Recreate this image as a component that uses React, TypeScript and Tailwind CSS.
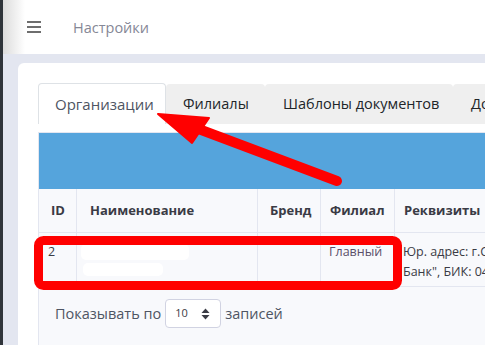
import React from "react";

export default function App() {
  const font = { fontFamily: '"Open Sans", "Noto Sans", sans-serif' };
  return (
    <div className="relative w-[485px] h-[345px] overflow-hidden bg-[#e3e6f0]" style={font}>
      <div className="flex h-full">
        <div className="w-[3px] h-full bg-[#2f343a] shrink-0" />
        <div className="flex-1 flex flex-col min-w-0">
          {/* header */}
          <div className="relative h-[54px] bg-white flex items-center shrink-0">
            <div className="absolute left-0 top-0 h-full w-[22px] bg-gradient-to-r from-[#dcdcdc] to-white" />
            <div className="relative ml-[24px] mb-[1px] flex flex-col gap-[3px] w-[14px]">
              <div className="h-[2px] bg-[#6e6e6e]" />
              <div className="h-[2px] bg-[#6e6e6e]" />
              <div className="h-[2px] bg-[#6e6e6e]" />
            </div>
            <div className="relative ml-[32px] text-[14.5px] text-[#858796] pt-[1px]">Настройки</div>
          </div>
          {/* content */}
          <div className="flex-1 pl-[15px] pt-[9px] min-w-0">
            <div className="h-full bg-white rounded-tl-[6px] pl-[20px] pt-[20px] flex flex-col overflow-hidden">
              {/* tabs */}
              <div className="flex h-[41px] shrink-0 overflow-hidden">
                <div className="w-[128px] shrink-0 border border-b-0 border-[#dee2e6] rounded-t-[4px] bg-white pl-[16px] flex items-center text-[15px] text-[#4e5563]">
                  Организации
                </div>
                <div className="w-[99px] shrink-0 mt-[1px] rounded-t-[4px] bg-[#efefef] pl-[17px] flex items-center text-[14.5px] text-[#212529]">
                  Филиалы
                </div>
                <div className="w-[188px] shrink-0 mt-[1px] rounded-t-[4px] bg-[#efefef] pl-[18px] flex items-center text-[14.5px] text-[#212529]">
                  Шаблоны документов
                </div>
                <div className="w-[120px] shrink-0 mt-[1px] rounded-t-[4px] bg-[#efefef] pl-[18px] flex items-center text-[14.5px] text-[#212529] whitespace-nowrap">
                  Документы
                </div>
              </div>
              {/* panel */}
              <div className="mt-[8px] flex-1 border-l border-t border-[#e3e6f0] bg-[#f8f9fc] flex flex-col">
                <div className="h-[56px] bg-[#55a4dc] shrink-0" />
                <div className="flex border-b border-[#e3e6f0] h-[44px] text-[13px] font-bold text-[#3a3b45] shrink-0">
                  <div className="w-[38px] shrink-0 border-r border-[#e3e6f0] pl-[12px] flex items-center">ID</div>
                  <div className="w-[181px] shrink-0 border-r border-[#e3e6f0] pl-[13px] flex items-center">Наименование</div>
                  <div className="w-[63px] shrink-0 border-r border-[#e3e6f0] pl-[12px] flex items-center">Бренд</div>
                  <div className="w-[74px] shrink-0 border-r border-[#e3e6f0] pl-[9px] flex items-center">Филиал</div>
                  <div className="flex-1 pl-[9px] flex items-center whitespace-nowrap overflow-hidden">Реквизиты</div>
                </div>
                <div className="flex border-b border-[#e3e6f0] h-[54px] text-[12.5px] text-[#3a3b45] shrink-0">
                  <div className="w-[38px] shrink-0 border-r border-[#e3e6f0] pl-[9px] pt-[9px] leading-[20px]">2</div>
                  <div className="w-[181px] shrink-0 border-r border-[#e3e6f0] pl-[4px] pt-[11px] flex flex-col gap-[3px]">
                    <div className="w-[108px] h-[16px] rounded-[5px] bg-white" />
                    <div className="ml-[2px] w-[80px] h-[13px] rounded-[5px] bg-white" />
                  </div>
                  <div className="w-[63px] shrink-0 border-r border-[#e3e6f0]" />
                  <div className="w-[74px] shrink-0 border-r border-[#e3e6f0] pl-[8px] pt-[9px] leading-[20px] text-[#5a4f6a]">Главный</div>
                  <div className="flex-1 pl-[8px] pt-[9px] leading-[20px] whitespace-nowrap overflow-hidden">
                    <div>Юр. адрес: г.Санкт-Петербург</div>
                    <div>Банк", БИК: 044525225</div>
                  </div>
                </div>
                <div className="flex items-center pl-[16px] pt-[12px] text-[14.5px] text-[#4e5563]">
                  <span>Показывать по</span>
                  <div className="ml-[4px] w-[56px] h-[29px] border border-[#d1d3e2] rounded-[4px] bg-white flex items-center justify-between pl-[9px] pr-[10px]">
                    <span className="text-[11px] text-[#3a3b45]">10</span>
                    <svg width="9" height="12" viewBox="0 0 9 12">
                      <path d="M4.5 0.5 L8.5 5 H0.5 Z" fill="#3a3b45" />
                      <path d="M4.5 11.5 L8.5 7 H0.5 Z" fill="#3a3b45" />
                    </svg>
                  </div>
                  <span className="ml-[4px]">записей</span>
                </div>
              </div>
            </div>
          </div>
        </div>
      </div>
      {/* annotations */}
      <svg className="absolute left-0 top-0 pointer-events-none" width="485" height="345" viewBox="0 0 485 345">
        <rect x="38.5" y="240.5" width="359" height="45" rx="5" fill="none" stroke="#ff0000" strokeWidth="9" />
        <line x1="337" y1="181" x2="196" y2="128" stroke="#ff0000" strokeWidth="10" strokeLinecap="round" />
        <path d="M158 114 L209 118 L192 143 Z" fill="#ff0000" stroke="#ff0000" strokeWidth="2" strokeLinejoin="round" />
      </svg>
    </div>
  );
}
